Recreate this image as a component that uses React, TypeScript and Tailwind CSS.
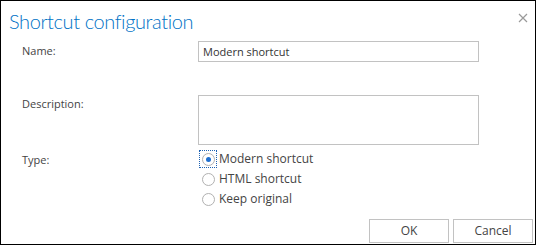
import React, { useState } from 'react';

const font = { fontFamily: '"Open Sans", "Noto Sans", sans-serif' };
const titleFont = { fontFamily: 'Lato, "Open Sans", sans-serif' };

const options = ['Modern shortcut', 'HTML shortcut', 'Keep original'];

const Radio = ({ checked, focused }: { checked: boolean; focused?: boolean }) => (
  <span
    className={`flex h-[16px] w-[16px] items-center justify-center ${
      focused ? 'outline outline-1 outline-dotted outline-[#1e63b4]' : ''
    }`}
  >
    <span className="flex h-[13px] w-[13px] items-center justify-center rounded-full border border-[#b1b1b1] bg-white">
      {checked && <span className="h-[5px] w-[5px] rounded-full bg-[#1e6fd0]" />}
    </span>
  </span>
);

const App = () => {
  const [type, setType] = useState('Modern shortcut');
  const [name, setName] = useState('Modern shortcut');

  return (
    <div
      className="flex h-[245px] w-[536px] flex-col border border-black bg-white text-[#444444]"
      style={font}
    >
      <div className="flex h-[40px] items-start justify-between pl-[8px] pr-[7px] pt-[5px]">
        <h1
          className="text-[20px] font-light leading-[30px] tracking-[-0.4px] text-[#0072c6]"
          style={titleFont}
        >
          Shortcut configuration
        </h1>
        <button className="mt-[7px] text-[#9a9a9a]">
          <svg width="10" height="10" viewBox="0 0 10 10">
            <path d="M1 1 L9 9 M9 1 L1 9" stroke="currentColor" strokeWidth="1.2" />
          </svg>
        </button>
      </div>

      <div className="flex pl-[21px]">
        <label className="w-[176px] pt-[2px] text-[11px]">Name:</label>
        <input
          value={name}
          onChange={(e) => setName(e.target.value)}
          className="h-[21px] w-[281px] border border-[#c2c2c2] px-[4px] text-[11px] text-[#333] outline-none"
        />
      </div>

      <div className="mt-[33px] flex pl-[21px]">
        <label className="w-[176px] pt-[1px] text-[11px]">Description:</label>
        <textarea className="h-[50px] w-[281px] resize-none border border-[#c2c2c2] outline-none" />
      </div>

      <div className="mt-[6px] flex pl-[21px]">
        <label className="w-[178px] pt-[1px] text-[11px]">Type:</label>
        <div className="flex flex-col gap-[4px]">
          {options.map((opt, i) => (
            <label
              key={opt}
              className="flex h-[16px] cursor-pointer items-center gap-[3px] text-[12px]"
              onClick={() => setType(opt)}
            >
              <Radio checked={type === opt} focused={i === 0} />
              {opt}
            </label>
          ))}
        </div>
      </div>

      <div className="mt-auto flex justify-end gap-[4px] pb-[1px] pr-[2px]">
        <button className="h-[24px] w-[80px] border border-[#c2c2c2] bg-white text-[12px]">
          OK
        </button>
        <button className="h-[24px] w-[80px] border border-[#c2c2c2] bg-white text-[12px]">
          Cancel
        </button>
      </div>
    </div>
  );
};

export default App;
